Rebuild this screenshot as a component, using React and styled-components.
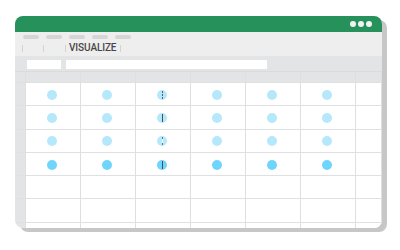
import React from "react";
import styled, { createGlobalStyle } from "styled-components";

const Global = createGlobalStyle`
  html, body { margin: 0; padding: 0; background: #ffffff; }
  body { font-family: Roboto, "Liberation Sans", sans-serif; }
`;

const Page = styled.div`
  width: 400px;
  height: 250px;
  padding: 16px 0 0 15px;
  box-sizing: border-box;
`;

const Window = styled.div`
  width: 367px;
  height: 212px;
  border-radius: 8px;
  overflow: hidden;
  background: #ffffff;
  box-shadow: 5px 4px 0 #c7c7c7;
  display: flex;
  flex-direction: column;
`;

const TitleBar = styled.div`
  height: 16px;
  flex: none;
  background: #26915a;
  display: flex;
  align-items: center;
  justify-content: flex-end;
  gap: 2px;
  padding-right: 10px;
`;

const WinDot = styled.span`
  width: 6px;
  height: 6px;
  border-radius: 50%;
  background: #f2f2f2;
`;

const Toolbar = styled.div`
  height: 24px;
  flex: none;
  background: #eeeeee;
  box-sizing: border-box;
  padding-top: 3px;
  display: flex;
  flex-direction: column;
`;

const PillRow = styled.div`
  display: flex;
  gap: 7px;
  padding-left: 8px;
  height: 4px;
`;

const Pill = styled.span`
  width: 16px;
  height: 3.5px;
  border-radius: 2px;
  background: #d5d5d5;
`;

const TabRow = styled.div`
  display: flex;
  align-items: center;
  height: 12px;
  margin-top: 3px;
  padding-left: 7px;
`;

const Sep = styled.span`
  width: 1px;
  height: 7px;
  background: #d3d3d3;
  margin-right: ${(p) => p.$space || 0}px;
`;

const TabLabel = styled.span`
  font-size: 10px;
  font-weight: 500;
  color: #474747;
  letter-spacing: -0.1px;
  padding: 0 4px 0 3px;
  line-height: 12px;
`;

const FormulaBar = styled.div`
  height: 16px;
  flex: none;
  background: #e3e4e6;
  display: flex;
  gap: 5px;
  padding: 4px 0 0 12px;
  box-sizing: border-box;
  border-bottom: 1px solid #dadbdd;
`;

const Field = styled.span`
  width: ${(p) => p.$w}px;
  height: 9px;
  background: #ffffff;
`;

const Grid = styled.div`
  display: grid;
  grid-template-columns: 11px repeat(6, 55px) 1fr;
  grid-template-rows: 11px;
  grid-auto-rows: 23.3px;
`;

const Cell = styled.div`
  box-sizing: border-box;
  border-right: 1px solid #dedfe1;
  border-bottom: 1px solid #dfe0e2;
  background: ${(p) => (p.$head ? "#e3e4e6" : "#ffffff")};
  display: flex;
  align-items: center;
  justify-content: center;
  &:last-child { border-right: none; }
`;

const Dot = styled.span`
  position: relative;
  width: 10px;
  height: 10px;
  border-radius: 50%;
  background: ${(p) => (p.$bright ? "#6fd5fc" : "#b6e8fc")};
  margin: 1px 2px 0 0;
`;

const Cursor = styled.span`
  position: absolute;
  left: 4.5px;
  top: 1px;
  width: 1.2px;
  height: 8px;
  background: ${(p) =>
    p.$kind === "solid"
      ? "#4a4f55"
      : p.$kind === "ghost"
      ? "linear-gradient(#6a6f75 0 2px, #f4fbff 2px 6px, #6a6f75 6px)"
      : "linear-gradient(#5a5f65 0 2px, transparent 2px 3px, #5a5f65 3px 5px, transparent 5px 6px, #5a5f65 6px)"};
`;

const rows = [
  { bright: false, cursor: "dashed" },
  { bright: false, cursor: "solid" },
  { bright: false, cursor: "ghost" },
  { bright: true, cursor: "solid" },
  null,
  null,
  null,
];

export default function App() {
  return (
    <>
      <Global />
      <Page>
        <Window>
          <TitleBar>
            <WinDot />
            <WinDot />
            <WinDot />
          </TitleBar>
          <Toolbar>
            <PillRow>
              {[0, 1, 2, 3, 4].map((i) => (
                <Pill key={i} />
              ))}
            </PillRow>
            <TabRow>
              <Sep $space={20} />
              <Sep $space={21} />
              <Sep />
              <TabLabel>VISUALIZE</TabLabel>
              <Sep />
            </TabRow>
          </Toolbar>
          <FormulaBar>
            <Field $w={34} />
            <Field $w={201} />
          </FormulaBar>
          <Grid>
            {Array.from({ length: 8 }).map((_, c) => (
              <Cell key={`h${c}`} $head />
            ))}
            {rows.map((r, ri) =>
              Array.from({ length: 8 }).map((_, c) => (
                <Cell key={`${ri}-${c}`} $head={c === 0}>
                  {r && c >= 1 && c <= 6 && (
                    <Dot $bright={r.bright}>
                      {c === 3 && <Cursor $kind={r.cursor} />}
                    </Dot>
                  )}
                </Cell>
              ))
            )}
          </Grid>
        </Window>
      </Page>
    </>
  );
}
